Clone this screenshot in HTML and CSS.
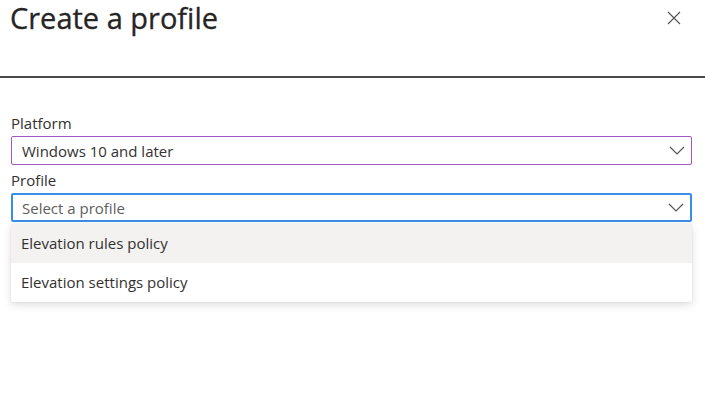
FILE: index.html
```html
<!DOCTYPE html>
<html lang="en">
<head>
    <meta charset="UTF-8">
    <title>Create a profile</title>
    <link rel="stylesheet" href="styles.css">
</head>
<body>
    <div class="header">
        <h1 class="title">Create a profile</h1>
        <button class="close" aria-label="Close">
            <svg width="14" height="14" viewBox="0 0 14 14"><path d="M1 1 L13 13 M13 1 L1 13" stroke="#555" stroke-width="1.2" fill="none"/></svg>
        </button>
    </div>

    <div class="form">
        <div class="label">Platform</div>
        <div class="select platform">
            <span>Windows 10 and later</span>
            <svg class="chevron" width="16" height="9" viewBox="0 0 16 9"><path d="M1 1 L8 8 L15 1" stroke="#555" stroke-width="1.2" fill="none"/></svg>
        </div>

        <div class="label">Profile</div>
        <div class="select profile">
            <span class="placeholder">Select a profile</span>
            <svg class="chevron" width="16" height="9" viewBox="0 0 16 9"><path d="M1 1 L8 8 L15 1" stroke="#555" stroke-width="1.2" fill="none"/></svg>
        </div>
        <div class="menu">
            <div class="item item-hover">Elevation rules policy</div>
            <div class="item">Elevation settings policy</div>
        </div>
    </div>
</body>
</html>
```

FILE: styles.css
```css
body {
    margin: 0;
    min-height: 396px;
    font-family: 'Open Sans', 'Noto Sans', sans-serif;
    color: #323130;
    background-color: #fff;
}

.header {
    display: flex;
    justify-content: space-between;
    align-items: flex-start;
    height: 76px;
    border-bottom: 2px solid #4a4a4a;
    padding: 0 24px 0 10px;
}

.title {
    margin: 0;
    font-size: 29px;
    font-weight: 400;
    line-height: 36px;
    color: #262524;
    -webkit-text-stroke: 0.3px #262524;
}

.close {
    background: none;
    border: none;
    padding: 0;
    margin-top: 11px;
    cursor: pointer;
}

.form {
    padding: 35px 13px 20px 11px;
}

.label {
    font-size: 15px;
    line-height: 21px;
    margin-bottom: 2px;
}

.select {
    display: flex;
    justify-content: space-between;
    align-items: center;
    height: 29px;
    box-sizing: border-box;
    padding: 0 6px 0 10px;
    font-size: 15px;
    border-radius: 2px;
}

.platform {
    border: 1px solid #a259c6;
    margin-bottom: 5px;
}

.profile {
    border: 2px solid #3a8ee6;
    padding-left: 9px;
}

.placeholder {
    color: #605e5c;
}

.menu {
    margin-top: 2px;
    background-color: #fff;
    box-shadow: 0 3px 8px rgba(0, 0, 0, 0.13), 0 0 2px rgba(0, 0, 0, 0.1);
    border-radius: 2px;
}

.item {
    height: 39px;
    line-height: 39px;
    padding-left: 10px;
    font-size: 15px;
}

.item-hover {
    background-color: #f3f2f1;
}
```
